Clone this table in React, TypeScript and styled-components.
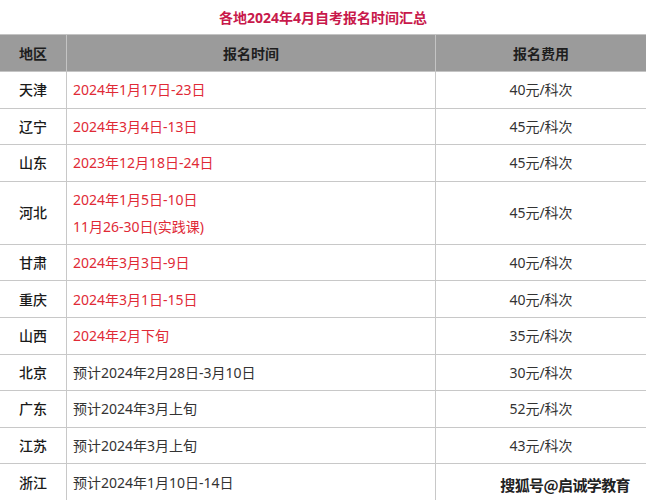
import React from "react";
import styled, { createGlobalStyle } from "styled-components";

const Global = createGlobalStyle`
  html, body { margin: 0; padding: 0; background: #fff; }
  body { font-family: "Noto Sans", "Noto Sans CJK SC", sans-serif; }
`;

const Page = styled.div`
  position: relative;
  width: 646px;
  height: 500px;
  overflow: hidden;
  background: #fff;
`;

const Title = styled.div`
  height: 34px;
  display: flex;
  align-items: center;
  justify-content: center;
  color: #c8194b;
  font-size: 14px;
  font-weight: 700;
  padding-left: 0px;
`;

const Table = styled.table`
  width: 644px;
  border-collapse: collapse;
  table-layout: fixed;
  font-size: 14px;
`;

const HeadCell = styled.th<{ $w: number }>`
  width: ${(p) => p.$w}px;
  height: 36px;
  padding: 0;
  background: #9b9b9b;
  color: #1e1e1e;
  font-weight: 700;
  text-align: center;
  border: 1px solid #c4c4c4;
  &:first-child { border-left: none; }
`;

const Row = styled.tr<{ $h: number }>`
  height: ${(p) => p.$h}px;
`;

const Cell = styled.td<{ $align?: string; $red?: boolean; $strong?: boolean }>`
  padding: 0 0 0 ${(p) => (p.$align === "left" ? "6px" : "0")};
  text-align: ${(p) => p.$align || "center"};
  color: ${(p) => (p.$red ? "#e02a36" : p.$strong ? "#1a1a1a" : "#333")};
  font-weight: ${(p) => (p.$strong ? 500 : 400)};
  border: 1px solid #c8c8c8;
  line-height: 27px;
  &:first-child { border-left: none; }
`;

const Watermark = styled.div`
  position: absolute;
  right: 16px;
  bottom: 5px;
  font-family: "Noto Sans CJK SC", sans-serif;
  font-size: 15px;
  font-weight: 700;
  color: #222;
  letter-spacing: -0.6px;
  text-shadow: -1px -1px 0 #fff, 1px -1px 0 #fff, -1px 1px 0 #fff, 1px 1px 0 #fff;
`;

type Item = { region: string; time: string[]; fee: string; red: boolean; h: number };

const rows: Item[] = [
  { region: "天津", time: ["2024年1月17日-23日"], fee: "40元/科次", red: true, h: 36.6 },
  { region: "辽宁", time: ["2024年3月4日-13日"], fee: "45元/科次", red: true, h: 36.6 },
  { region: "山东", time: ["2023年12月18日-24日"], fee: "45元/科次", red: true, h: 36.6 },
  { region: "河北", time: ["2024年1月5日-10日", "11月26-30日(实践课)"], fee: "45元/科次", red: true, h: 63 },
  { region: "甘肃", time: ["2024年3月3日-9日"], fee: "40元/科次", red: true, h: 36.6 },
  { region: "重庆", time: ["2024年3月1日-15日"], fee: "40元/科次", red: true, h: 36.6 },
  { region: "山西", time: ["2024年2月下旬"], fee: "35元/科次", red: true, h: 36.6 },
  { region: "北京", time: ["预计2024年2月28日-3月10日"], fee: "30元/科次", red: false, h: 36.6 },
  { region: "广东", time: ["预计2024年3月上旬"], fee: "52元/科次", red: false, h: 36.6 },
  { region: "江苏", time: ["预计2024年3月上旬"], fee: "43元/科次", red: false, h: 36.6 },
  { region: "浙江", time: ["预计2024年1月10日-14日"], fee: "", red: false, h: 37 },
];

export default function App() {
  return (
    <Page>
      <Global />
      <Title>各地2024年4月自考报名时间汇总</Title>
      <Table>
        <thead>
          <tr>
            <HeadCell $w={66}>地区</HeadCell>
            <HeadCell $w={368}>报名时间</HeadCell>
            <HeadCell $w={210}>报名费用</HeadCell>
          </tr>
        </thead>
        <tbody>
          {rows.map((r) => (
            <Row key={r.region} $h={r.h}>
              <Cell $strong>{r.region}</Cell>
              <Cell $align="left" $red={r.red}>
                {r.time.map((t, i) => (
                  <div key={i}>{t}</div>
                ))}
              </Cell>
              <Cell>{r.fee}</Cell>
            </Row>
          ))}
        </tbody>
      </Table>
      <Watermark>搜狐号@启诚学教育</Watermark>
    </Page>
  );
}
